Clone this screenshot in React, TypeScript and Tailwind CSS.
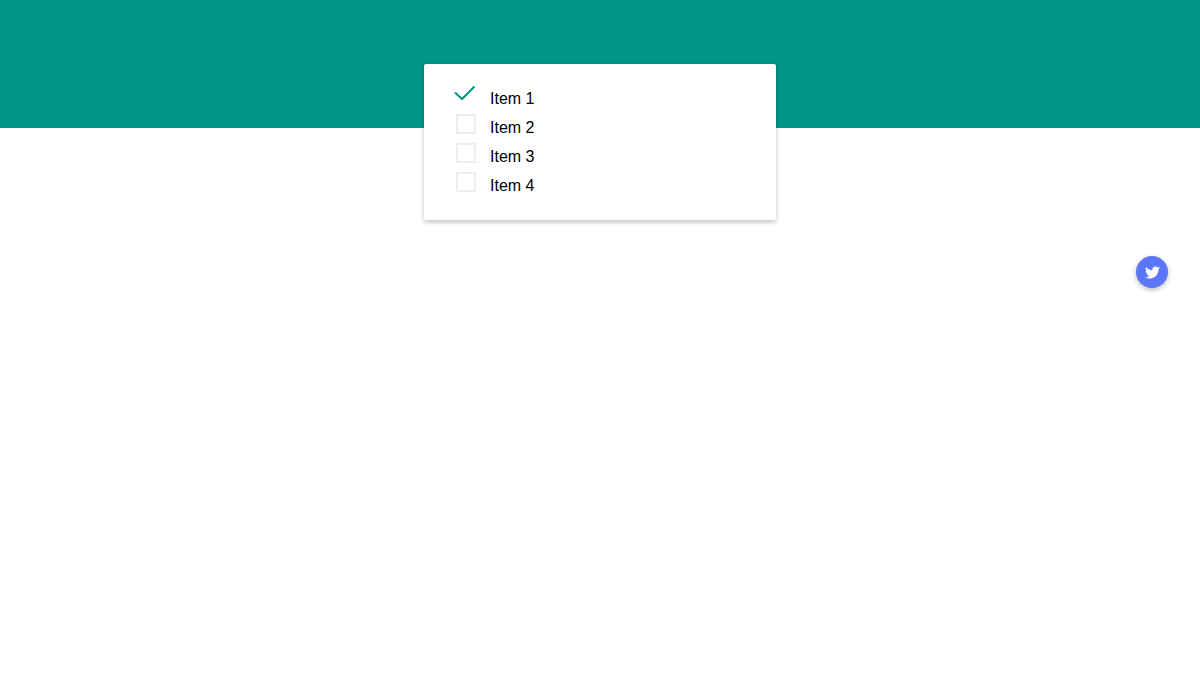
import { FaTwitter } from 'react-icons/fa';

const items = ['Item 2', 'Item 3', 'Item 4'];

export default function App() {
  return (
    <div className="min-h-[682px] bg-white font-['Liberation_Sans',Arial,sans-serif]">
      <div className="h-[128px] bg-[#009688] pt-16">
        <div className="relative mx-auto w-[352px] rounded-[2px] bg-white pt-5 pb-5 pl-8 shadow-[0_2px_5px_0_rgba(0,0,0,0.26)]">
          <label className="flex h-[29px] items-center">
            <svg className="mr-[14px] h-5 w-5 -translate-y-[4px] overflow-visible" viewBox="0 0 20 20" fill="none">
              <path d="M-1 7.5 L6 14 L18.5 1.5" stroke="#009688" strokeWidth="2" />
            </svg>
            <span className="text-base text-black">Item 1</span>
          </label>
          {items.map(item => (
            <label key={item} className="flex h-[29px] items-center">
              <span className="mr-[14px] h-5 w-5 -translate-y-[4px] border-2 border-[#eeeeee]" />
              <span className="text-base text-black">{item}</span>
            </label>
          ))}
        </div>
      </div>
      <div className="flex justify-end pt-[128px] pr-8">
        <button className="flex h-8 w-8 items-center justify-center rounded-full bg-[#5b76f7] text-white shadow-[0_2px_5px_0_rgba(0,0,0,0.26)]">
          <FaTwitter size={15} />
        </button>
      </div>
    </div>
  );
}
